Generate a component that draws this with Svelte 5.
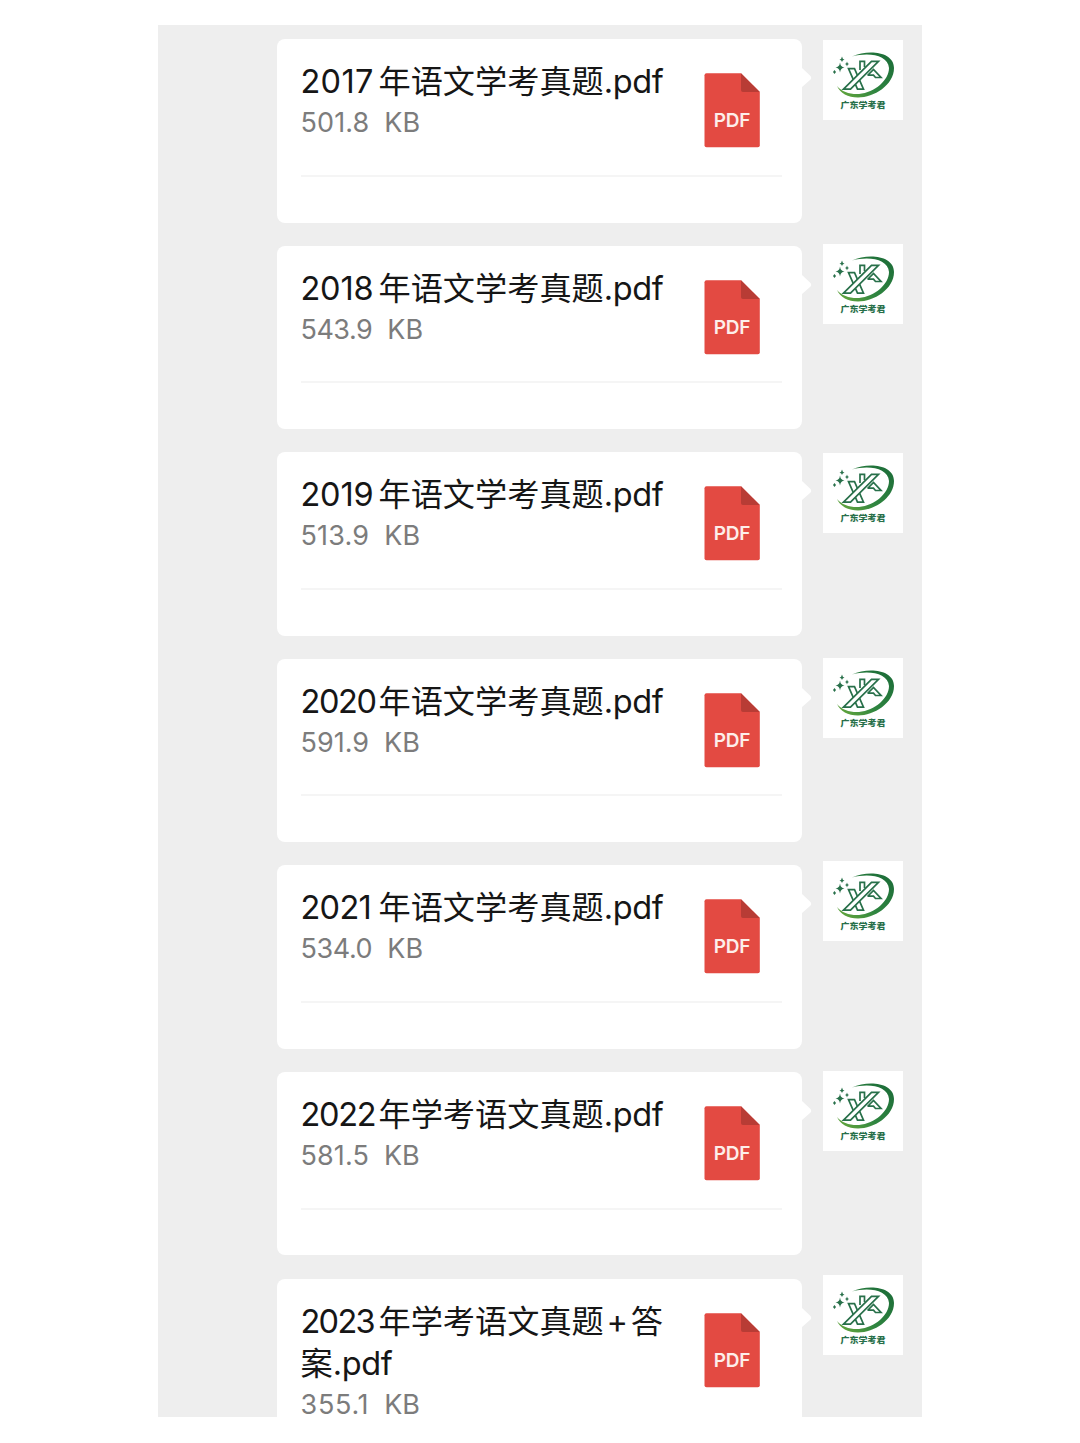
<script>
	const files = [
		{ year: "2017", track: 0.3, name: "年语文学考真题", ext: ".pdf", size: "501.8", sizeTrack: 0.1, top: 1 },
		{ year: "2018", track: -0.2, name: "年语文学考真题", ext: ".pdf", size: "543.9", sizeTrack: -0.5, top: -2 },
		{ year: "2019", track: -0.2, name: "年语文学考真题", ext: ".pdf", size: "513.9", sizeTrack: 0.2, top: 1 },
		{ year: "2020", track: -1.4, name: "年语文学考真题", ext: ".pdf", size: "591.9", sizeTrack: 0, top: -1 },
		{ year: "2021", track: -0.7, name: "年语文学考真题", ext: ".pdf", size: "534.0", sizeTrack: -0.4, top: -4 },
		{ year: "2022", track: -1.3, name: "年学考语文真题", ext: ".pdf", size: "581.5", sizeTrack: 0.1, top: -1 },
		{ year: "2023", track: -1.7, name: "年学考语文真题", plus: "答", rest: "案", ext: ".pdf", size: "355.1", sizeTrack: 0.7, top: -4 }
	]
</script>

<div class="page">
	<div class="chat">
		{#each files as file, i}
		<div class="message">
			<div class="card">
				<div class="body">
					<div class="info">
						<div class="title">
							<span class="year" style="letter-spacing: {file.track}px">{file.year}</span><span class="cjk">{file.name}</span>{#if file.plus}<span class="plus">+</span><span class="cjk">{file.plus}</span><br><span class="cjk">{file.rest}</span>{/if}<span class="ext">{file.ext}</span>
						</div>
						<div class="size"><span style="letter-spacing: {file.sizeTrack}px">{file.size}</span><span>KB</span></div>
					</div>
					<svg class="pdf" viewBox="0 0 56 75">
						<path d="M2.500 0.300H37L55.800 19V72.200Q55.800 74.200 53.800 74.200H2.500Q0.500 74.200 0.500 72.200V2.300Q0.500 0.300 2.500 0.300Z" fill="#e34a42" />
						<path d="M37 0.300L55.800 19H39Q37 19 37 17Z" fill="#b83c35" />
						<text x="28" y="53.500" text-anchor="middle">PDF</text>
					</svg>
				</div>
				{#if i < files.length - 1}
				<div class="line"></div>
				{/if}
				<svg class="tail" viewBox="0 0 10 20"><path d="M0 0L8 7.500Q10.500 10 8 12L0 19Z" fill="#fff" /></svg>
			</div>
			<div class="avatar" style="margin-top: {file.top}px">
				<svg viewBox="0 0 80 80">
					<defs>
						<linearGradient id="swoosh" x1="0" y1="1" x2="1" y2="0">
							<stop offset="0" stop-color="#6cab3c" />
							<stop offset="0.4" stop-color="#2f8540" />
							<stop offset="1" stop-color="#1b6b38" />
						</linearGradient>
					</defs>
					<path d="M29 16.500C46 9 71 12 71 28C71 45 51 57.500 35 57.500C25 57.500 17 53 14 46C19 52 27 54.500 36 54C52 52.500 66 40 66 28C65 15 46 12 29 16.500Z" fill="url(#swoosh)" />
					<g fill="none" stroke="#28704a" stroke-width="1.700">
						<path d="M37 30V21.400H41.500V27" />
						<path d="M25.500 28.700H31.500L40.500 49.200H34.500Z" fill="#fff" />
						<path d="M20.500 49.200L48.500 21.400H55.500L27.500 49.200Z" fill="#fff" />
						<path d="M44.500 35.500L50.500 29.500L58 37.500H52.500L50.500 35.200H45" />
					</g>
					<g fill="#28704a">
						<path d="M17 22.500Q17.500 27 21.500 27.500Q17.500 28 17 32.500Q16.500 28 12.500 27.500Q16.500 27 17 22.500Z" />
						<path d="M19 16.500Q19.300 19 21.500 19.500Q19.300 20 19 22Q18.700 20 16.500 19.500Q18.700 19 19 16.500Z" />
						<path d="M24 21.500Q24.300 23.700 26 24Q24.300 24.300 24 26.500Q23.700 24.300 22 24Q23.700 23.700 24 21.500Z" />
						<path d="M11.500 30L13 32L11.500 34L10 32Z" />
					</g>
					<text x="17.500" y="68" textLength="45" lengthAdjust="spacingAndGlyphs">广东学考君</text>
				</svg>
			</div>
		</div>
		{/each}
	</div>
</div>

<style>
	:global(body) {
		background: #fff;
	}
	.page {
		height: 1443px;
		box-sizing: border-box;
		padding: 25px 158px 26px;
		background: #fff;
	}
	.chat {
		width: 764px;
		height: 1392px;
		box-sizing: border-box;
		padding: 14px 19px 0 119px;
		background: #eee;
	}
	.message {
		display: flex;
		justify-content: space-between;
		align-items: flex-start;
		height: 206.600px;
	}
	.card {
		position: relative;
		width: 525px;
		height: 183.500px;
		box-sizing: border-box;
		padding: 22px 20.500px 0 23.500px;
		border-radius: 8px;
		background: #fff;
	}
	/* the last message runs off the end of the chat */
	.message:last-child,
	.message:last-child .card {
		height: 138.400px;
	}
	.message:last-child .card {
		border-radius: 8px 8px 0 0;
	}
	.body {
		display: flex;
		justify-content: space-between;
		height: 113.700px;
	}
	.info {
		font-family: Inter, "Noto Sans CJK SC", sans-serif;
		white-space: nowrap;
	}
	.title {
		font-size: 32.500px;
		line-height: 42px;
		color: #161616;
	}
	.year {
		display: inline-block;
		width: 78px;
	}
	.cjk {
		font-family: "Noto Sans CJK SC", sans-serif;
		font-size: 32.200px;
		line-height: 1;
	}
	.plus {
		display: inline-block;
		width: 27px;
		text-align: center;
	}
	.ext {
		letter-spacing: -0.400px;
	}
	.size {
		display: flex;
		gap: 15px;
		font-size: 27px;
		line-height: 30px;
		padding: 5px 0;
		color: #7c7c7c;
	}
	.pdf {
		width: 56px;
		height: 75px;
		margin: 12px 21.500px 0 0;
	}
	.pdf text {
		font: 600 19px Inter, sans-serif;
		letter-spacing: -0.200px;
		fill: #fdeeea;
	}
	.line {
		height: 2px;
		background: #f5f5f5;
	}
	.tail {
		position: absolute;
		left: 524.500px;
		top: 29px;
		width: 10px;
		height: 20px;
	}
	.avatar {
		width: 80px;
		height: 80px;
		background: #fff;
	}
	.avatar svg {
		display: block;
	}
	.avatar text {
		font: 900 8.500px "Noto Sans CJK SC", sans-serif;
		fill: #28704a;
	}
</style>
